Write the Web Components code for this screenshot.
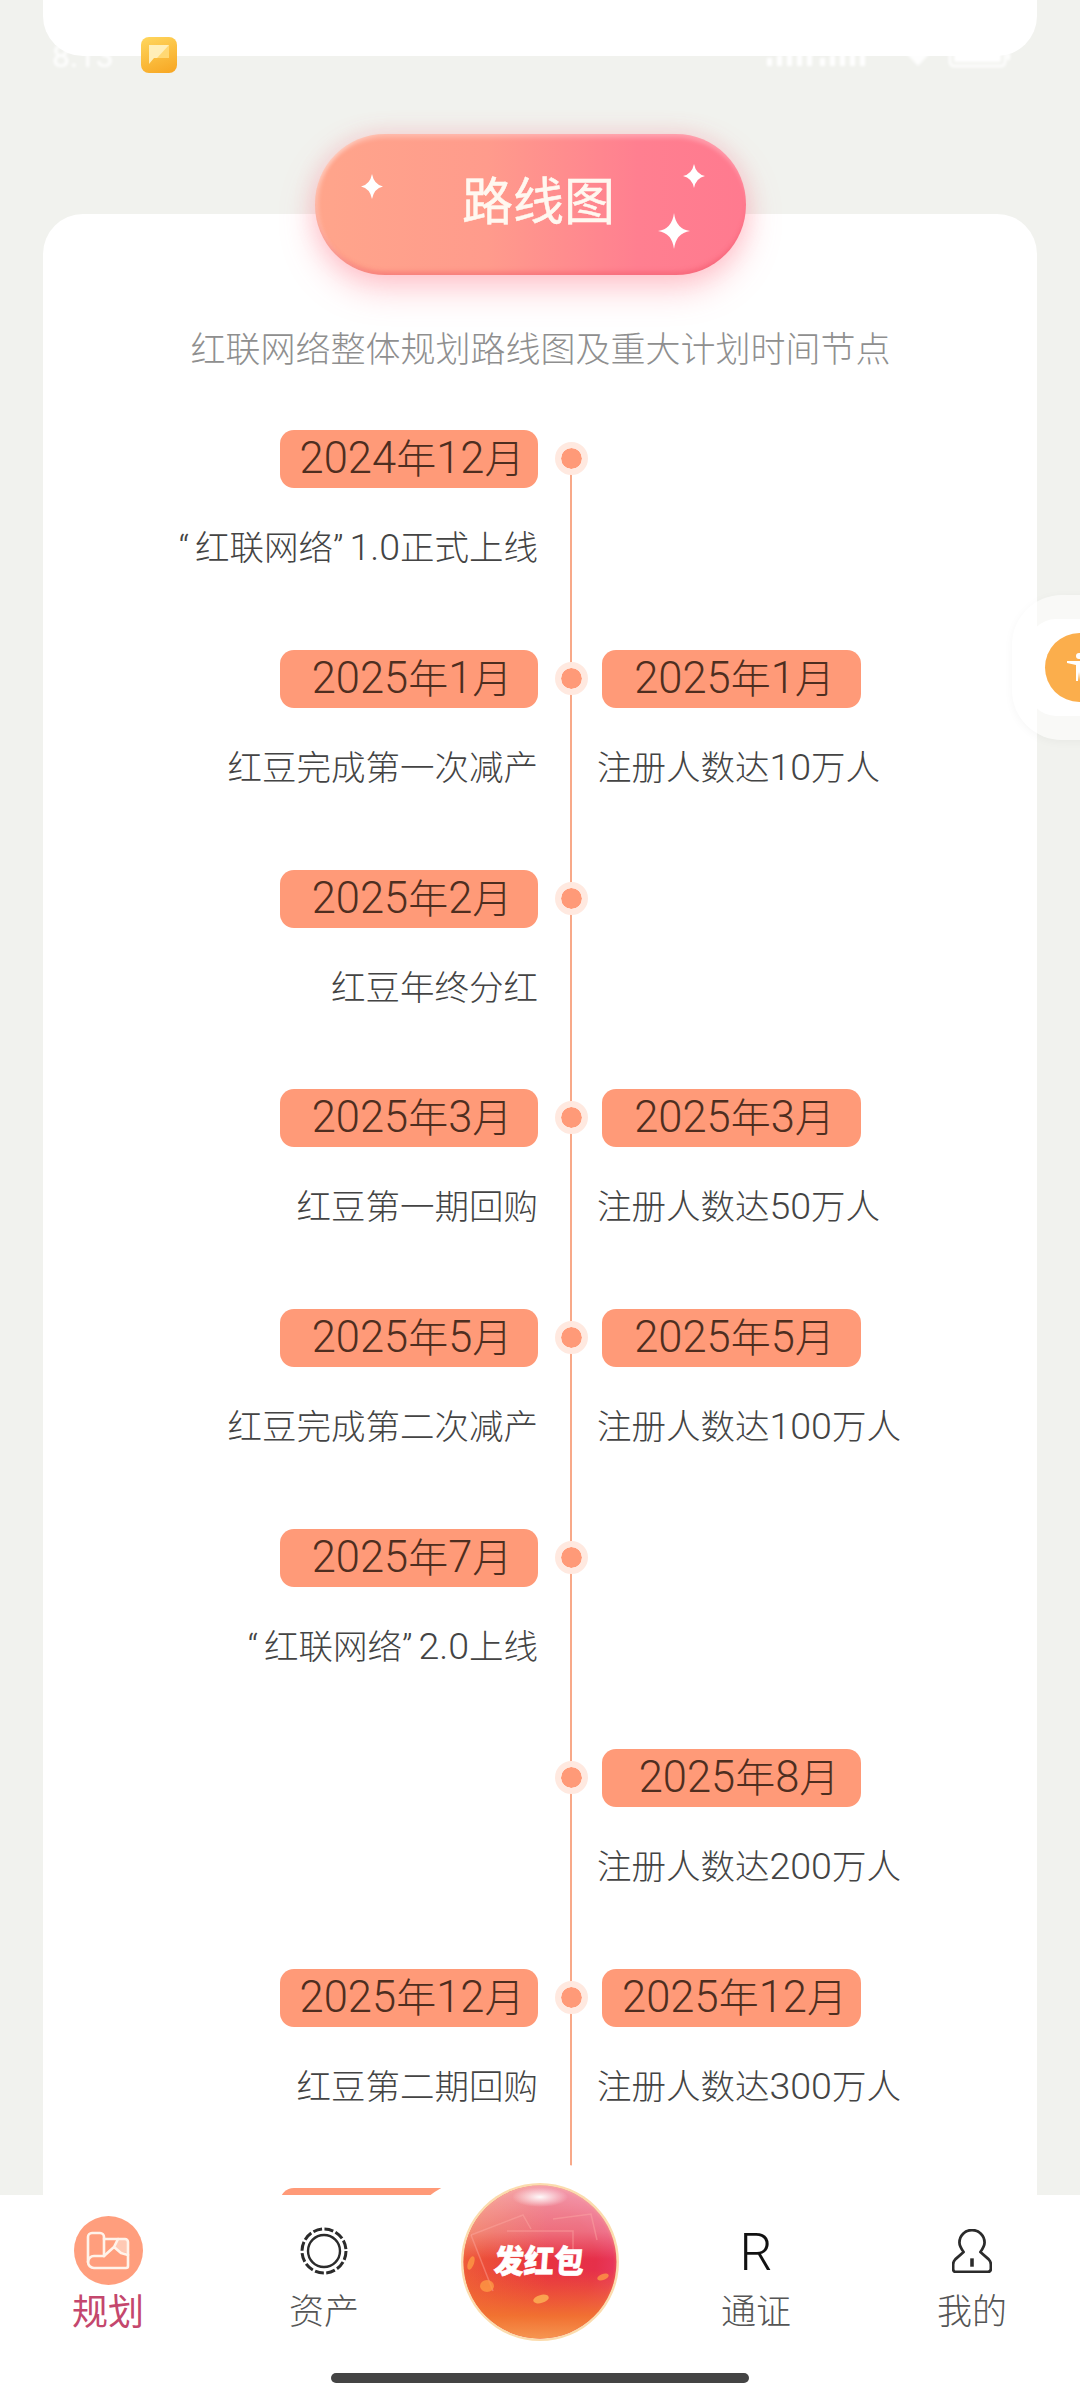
<!DOCTYPE html>
<html lang="zh-CN">
<head>
<meta charset="utf-8">
<title>路线图</title>
<style>
  html, body { margin: 0; padding: 0; }
  body { font-family: Roboto, "Noto Sans CJK SC", sans-serif; background: #f1f2ee; }
</style>
</head>
<body>
<roadmap-page>
  <status-bar slot="over"></status-bar>
  <float-widget slot="over"></float-widget>
  <bottom-nav slot="over">
    <nav-item label="规划" active>
      <svg width="69" height="69" viewBox="0 0 69 69">
        <circle cx="34.5" cy="34.5" r="34.5" fill="#ff9e7d"/>
        <path d="M44 23h9v14l-7-1-6-6z" fill="#ffc9b4"/>
        <g fill="none" stroke="#fff3ea" stroke-width="2.6" stroke-linecap="round" stroke-linejoin="round">
          <path d="M14 46V21a4 4 0 0 1 4-4h8a4 4 0 0 1 4 4v19"/>
          <path d="M30 23h21a3 3 0 0 1 3 3v24a2 2 0 0 1-2 2H20a6 6 0 0 1-6-6 6 6 0 0 1 6-6h10"/>
          <path d="M30 40l10-9 7 6 7 2M44 23l-4 8"/>
        </g>
      </svg>
    </nav-item>
    <nav-item label="资产">
      <svg width="50" height="50" viewBox="0 0 50 50" fill="none" stroke="#2b2b2b">
        <circle cx="25" cy="25" r="22" stroke-width="3" stroke-dasharray="9 2.5"/>
        <circle cx="25" cy="25" r="16" stroke-width="2.4"/>
      </svg>
    </nav-item>
    <red-ball></red-ball>
    <nav-item label="通证"><span class="r">R</span></nav-item>
    <nav-item label="我的">
      <svg width="40" height="44" viewBox="0 0 38 42" fill="none" stroke="#2b2b2b" stroke-width="2.6" stroke-linejoin="round">
        <path d="M11 22C8 18 7 15 7 13a12 12 0 0 1 24 0c0 2-1 5-4 9l8 7q2 2 2 5v4q0 3-3 3H4q-3 0-3-3v-4q0-3 2-5z"/>
        <path d="M19 28v8" stroke-width="3.4"/>
      </svg>
    </nav-item>
  </bottom-nav>

  <roadmap-pill>路线图</roadmap-pill>
  <roadmap-card sub="红联网络整体规划路线图及重大计划时间节点">
    <timeline-row first left="2024年12月" ltext="“红联网络”1.0正式上线"></timeline-row>
    <timeline-row left="2025年1月" ltext="红豆完成第一次减产" right="2025年1月" rtext="注册人数达10万人"></timeline-row>
    <timeline-row left="2025年2月" ltext="红豆年终分红"></timeline-row>
    <timeline-row left="2025年3月" ltext="红豆第一期回购" right="2025年3月" rtext="注册人数达50万人"></timeline-row>
    <timeline-row left="2025年5月" ltext="红豆完成第二次减产" right="2025年5月" rtext="注册人数达100万人"></timeline-row>
    <timeline-row left="2025年7月" ltext="“红联网络”2.0上线"></timeline-row>
    <timeline-row right="2025年8月" rtext="注册人数达200万人" nudge></timeline-row>
    <timeline-row left="2025年12月" ltext="红豆第二期回购" right="2025年12月" rtext="注册人数达300万人"></timeline-row>
    <timeline-row left=" "></timeline-row>
  </roadmap-card>
</roadmap-page>

<script>
const FONT = `Roboto, "Noto Sans CJK SC", sans-serif`;

// digits and curly quotes run wider in the reference than the stock font gives
const fmt = (s) => s
  .replace(/[\d.]+/g, '<span class="num">$&</span>')
  .replace(/[“”]/g, '<span class="q">$&</span>');

class RoadmapPage extends HTMLElement {
  constructor() {
    super();
    this.attachShadow({ mode: "open" });
    this.shadowRoot.innerHTML = `
    <style>
      :host {
        display: block;
        position: relative;
        width: 1080px;
        height: 2400px;
        overflow: hidden;
        background: #f1f2ee;
        font-family: ${FONT};
      }
      .top-card {
        height: 56px;
        margin: 0 43px;
        background: #fff;
        border-radius: 0 0 40px 40px;
      }
    </style>
    <div class="top-card"></div>
    <slot></slot>
    <slot name="over"></slot>`;
  }
}

class StatusBar extends HTMLElement {
  constructor() {
    super();
    this.attachShadow({ mode: "open" });
    this.shadowRoot.innerHTML = `
    <style>
      :host {
        position: absolute;
        left: 52px;
        right: 68px;
        top: 37px;
        height: 36px;
        display: flex;
        align-items: center;
        color: #fff;
      }
      .time { font-size: 32px; width: 89px; margin-top: 2px; filter: blur(1.4px); }
      .app {
        width: 36px;
        height: 36px;
        border-radius: 8px;
        background: linear-gradient(160deg, #ffd75e, #f7a521);
        display: grid;
        place-items: center;
      }
      .right { margin-left: auto; margin-top: 2px; filter: blur(1.4px); }
    </style>
    <span class="time">8:13</span>
    <span class="app">
      <svg width="22" height="20" viewBox="0 0 22 20"><path d="M1 0h20v13H6l-5 6z" fill="#fff3c4" opacity=".9"/><path d="M21 0v13H9z" fill="#ffd873"/></svg>
    </span>
    <svg class="right" width="247" height="24" viewBox="0 0 247 24" fill="#fff">
      <path d="M2 14h5v8H2zM12 11h5v11h-5zM22 8h5v14h-5zM32 5h5v17h-5zM42 2h5v20h-5z"/>
      <path d="M55 14h5v8h-5zM65 11h5v11h-5zM75 8h5v14h-5zM85 5h5v17h-5zM95 2h5v20h-5z"/>
      <path d="M140 8q13-10 26 0l-13 14z" opacity=".9"/>
      <rect x="185" y="3" width="55" height="19" rx="4" fill="none" stroke="#fff" stroke-width="2.5"/>
      <rect x="189" y="7" width="47" height="11" rx="1"/>
      <rect x="242" y="9" width="3" height="7"/>
    </svg>`;
  }
}

class FloatWidget extends HTMLElement {
  constructor() {
    super();
    this.attachShadow({ mode: "open" });
    this.shadowRoot.innerHTML = `
    <style>
      :host {
        position: absolute;
        left: 1012px;
        top: 595px;
        width: 100px;
        height: 145px;
        border-radius: 50px 0 0 50px;
        background: rgba(255, 255, 255, .55);
        box-shadow: 0 2px 10px rgba(0, 0, 0, .04);
        display: flex;
        align-items: center;
      }
      .inner {
        margin-left: 16px;
        width: 90px;
        height: 97px;
        border-radius: 28px 0 0 28px;
        background: #fff;
        display: flex;
        align-items: center;
      }
      .circle {
        flex: none;
        margin-left: 17px;
        width: 69px;
        height: 69px;
        border-radius: 50%;
        background: #fbae4c;
      }
      svg { display: block; }
    </style>
    <div class="inner">
      <div class="circle">
        <svg width="69" height="69" viewBox="0 0 69 69" fill="#fff">
          <circle cx="34" cy="23" r="3"/>
          <path d="M22 28h24v2l-9 2v16h-2l-1-9-1 9h-2V32l-9-2z"/>
        </svg>
      </div>
    </div>`;
  }
}

class RoadmapPill extends HTMLElement {
  constructor() {
    super();
    this.attachShadow({ mode: "open" });
    const star = (x, y, w, h) => {
      const d = `M${w / 2} 0Q${w / 2 + 2} ${h / 2 - 2} ${w} ${h / 2}Q${w / 2 + 2} ${h / 2 + 2} ${w / 2} ${h}Q${w / 2 - 2} ${h / 2 + 2} 0 ${h / 2}Q${w / 2 - 2} ${h / 2 - 2} ${w / 2} 0Z`;
      return `<svg class="star" style="left:${x}px;top:${y}px" width="${w}" height="${h}" viewBox="0 0 ${w} ${h}"><path d="${d}" fill="#fff"/></svg>`;
    };
    this.shadowRoot.innerHTML = `
    <style>
      :host {
        display: flex;
        position: relative;
        z-index: 2;
        box-sizing: border-box;
        width: 431px;
        height: 141px;
        margin: 78px 0 -61px 315px;
        border-radius: 70px;
        align-items: center;
        justify-content: center;
        padding: 0 0 3px 16px;
        background: linear-gradient(90deg, #ffa58b 0%, #ff9b8c 40%, #ff7f90 75%, #ff7a8f 100%);
        box-shadow:
          inset 0 6px 4px -2px rgba(255, 255, 255, .25),
          inset 0 -5px 5px -2px rgba(235, 70, 90, .4),
          inset 5px 0 4px -2px rgba(255, 255, 255, .3),
          0 14px 34px rgba(255, 110, 130, .36),
          0 0 22px rgba(255, 110, 130, .2);
        color: #fff8f0;
        font-size: 51px;
        line-height: 60px;
        -webkit-text-stroke: .5px #fff8f0;
      }
      .star { position: absolute; }
    </style>
    <slot></slot>
    ${star(46, 40, 22, 25)}
    ${star(368, 30, 22, 24)}
    ${star(343, 79, 32, 36)}`;
  }
}

class RoadmapCard extends HTMLElement {
  constructor() {
    super();
    this.attachShadow({ mode: "open" });
  }

  connectedCallback() {
    this.shadowRoot.innerHTML = `
    <style>
      :host {
        display: block;
        margin: 0 43px;
        padding-top: 112px;
        background: #fff;
        border-radius: 40px 40px 0 0;
      }
      .sub {
        font-size: 35px;
        font-weight: 300;
        line-height: 50px;
        color: #8f8f8f;
        text-align: center;
        margin: 0 0 54px 1px;
      }
    </style>
    <div class="sub">${this.getAttribute("sub")}</div>
    <slot></slot>`;
  }
}

class TimelineRow extends HTMLElement {
  constructor() {
    super();
    this.attachShadow({ mode: "open" });
  }

  side(cls, date, text) {
    if (date === null) return `<div class="${cls}"></div>`;
    const nudge = this.hasAttribute("nudge") ? " nudge" : "";
    return `
      <div class="${cls}">
        <div class="badge${nudge}">${fmt(date)}</div>
        ${text ? `<div class="text">${fmt(text)}</div>` : ""}
      </div>`;
  }

  connectedCallback() {
    const left = this.getAttribute("left");
    const right = this.getAttribute("right");
    this.shadowRoot.innerHTML = `
    <style>
      :host {
        display: grid;
        grid-template-columns: 495px 64px 1fr;
        height: 219.8px;
      }
      .left { display: flex; flex-direction: column; align-items: flex-end; }
      .right { display: flex; flex-direction: column; align-items: flex-start; }
      .badge {
        box-sizing: border-box;
        width: 258px;
        height: 58px;
        padding-left: 6px;
        border-radius: 14px;
        background: #ff9a78;
        color: #4e2e20;
        font-size: 40px;
        font-weight: 300;
        line-height: 60px;
        text-align: center;
      }
      .right .badge { width: 259px; }
      .badge .num { font-size: 43.5px; line-height: 1; }
      .badge.nudge { padding-left: 15px; }
      .text {
        margin-top: 35px;
        font-size: 34.5px;
        font-weight: 300;
        line-height: 50px;
        color: #444;
        white-space: nowrap;
      }
      .text .num { font-size: 37.5px; line-height: 1; }
      .text .q { letter-spacing: 6px; }
      .right .text { margin-left: -5px; }
      .node {
        box-sizing: border-box;
        padding-left: 2px;
        display: flex;
        justify-content: center;
        background: linear-gradient(#f8a989, #f8a989) 32px ${this.hasAttribute("first") ? "28px" : "0"} / 2px 100% no-repeat;
      }
      .dot {
        box-sizing: border-box;
        width: 33px;
        height: 33px;
        margin-top: 12px;
        border-radius: 50%;
        background: #ff9a78;
        background-clip: padding-box;
        border: 6px solid #ffe9e0;
      }
    </style>
    ${this.side("left", left, this.getAttribute("ltext"))}
    <div class="node"><div class="dot"></div></div>
    ${this.side("right", right, this.getAttribute("rtext"))}`;
  }
}

class BottomNav extends HTMLElement {
  constructor() {
    super();
    this.attachShadow({ mode: "open" });
    this.shadowRoot.innerHTML = `
    <style>
      :host {
        position: absolute;
        left: 0;
        right: 0;
        bottom: 0;
        height: 205px;
        box-sizing: border-box;
        padding-top: 21px;
        background: #fff;
        z-index: 3;
      }
      .items {
        display: grid;
        grid-template-columns: repeat(5, 216px);
        height: 119px;
      }
      .home {
        width: 418px;
        height: 10px;
        margin: 38px auto 0;
        border-radius: 5px;
        background: #444;
      }
    </style>
    <div class="items"><slot></slot></div>
    <div class="home"></div>`;
  }
}

class NavItem extends HTMLElement {
  constructor() {
    super();
    this.attachShadow({ mode: "open" });
  }

  connectedCallback() {
    const active = this.hasAttribute("active");
    this.shadowRoot.innerHTML = `
    <style>
      :host {
        display: flex;
        flex-direction: column;
        align-items: center;
      }
      .icon {
        height: 69px;
        display: flex;
        align-items: center;
        justify-content: center;
      }
      .label {
        margin-top: 6px;
        font-size: ${active ? 36 : 35}px;
        font-weight: ${active ? 400 : 300};
        line-height: 44px;
        color: ${active ? "#c4476d" : "#555"};
      }
      ::slotted(.r) {
        font-family: Roboto, sans-serif;
        font-size: 52px;
        font-weight: 300;
        line-height: 52px;
        color: #111;
        margin-top: 4px;
      }
      ::slotted(svg) { display: block; }
    </style>
    <div class="icon"><slot></slot></div>
    <div class="label">${this.getAttribute("label")}</div>`;
  }
}

class RedBall extends HTMLElement {
  constructor() {
    super();
    this.attachShadow({ mode: "open" });
    this.shadowRoot.innerHTML = `
    <style>
      :host {
        display: block;
        position: relative;
      }
      .halo {
        position: absolute;
        left: -41px;
        top: -53px;
        width: 298px;
        height: 198px;
        border-radius: 50%;
        background: #fff;
      }
      .ball {
        position: absolute;
        left: 29px;
        top: -33px;
        width: 158px;
        height: 158px;
        display: grid;
        place-items: center;
      }
      svg { position: absolute; inset: 0; }
      .txt {
        position: relative;
        margin-left: -3px;
        color: #fff;
        font-size: 30px;
        font-weight: 900;
        line-height: 36px;
        transform: skewX(-4deg) scaleY(1.08);
        -webkit-text-stroke: .6px #fff;
        white-space: nowrap;
      }
    </style>
    <div class="halo"></div>
    <div class="ball">
      <svg width="158" height="158" viewBox="0 0 158 158">
        <defs>
          <radialGradient id="body" cx="50%" cy="50%" r="52%">
            <stop offset="0" stop-color="#e8323f"/>
            <stop offset=".7" stop-color="#e6304a"/>
            <stop offset=".92" stop-color="#e8375a"/>
            <stop offset="1" stop-color="#ef5c58"/>
          </radialGradient>
          <linearGradient id="top" x1="0" y1="0" x2="0" y2="1">
            <stop offset="0" stop-color="#fff" stop-opacity=".5"/>
            <stop offset=".3" stop-color="#fff" stop-opacity=".3"/>
            <stop offset=".48" stop-color="#fff" stop-opacity="0"/>
          </linearGradient>
          <linearGradient id="bottom" x1="0" y1="0" x2="0" y2="1">
            <stop offset=".55" stop-color="#f06a2c" stop-opacity="0"/>
            <stop offset=".85" stop-color="#f2762e" stop-opacity=".9"/>
            <stop offset="1" stop-color="#f69650"/>
          </linearGradient>
          <linearGradient id="leftglow" x1="0" y1="0" x2="1" y2="0">
            <stop offset="0" stop-color="#f0652c" stop-opacity=".75"/>
            <stop offset=".55" stop-color="#f0652c" stop-opacity="0"/>
          </linearGradient>
          <radialGradient id="spot" cx="50%" cy="50%" r="50%">
            <stop offset="0" stop-color="#fff" stop-opacity=".95"/>
            <stop offset="1" stop-color="#fff" stop-opacity="0"/>
          </radialGradient>
        </defs>
        <circle cx="79" cy="79" r="79" fill="#fbdcae"/>
        <circle cx="79" cy="79" r="76.5" fill="url(#body)"/>
        <circle cx="79" cy="79" r="76.5" fill="url(#leftglow)"/>
        <circle cx="79" cy="79" r="76.5" fill="url(#bottom)"/>
        <circle cx="79" cy="79" r="76.5" fill="url(#top)"/>
        <ellipse cx="79" cy="14" rx="28" ry="10" fill="url(#spot)"/>
        <g fill="none" stroke="#ffb0a8" stroke-opacity=".4" stroke-width="1.5">
          <path d="M10 52l52-20 8 14M46 48h66l0 20M92 36l38-5 6 26"/>
          <path d="M10 52l22 56"/>
        </g>
        <g fill="#ff9d45" opacity=".75">
          <ellipse cx="10" cy="80" rx="3" ry="7" transform="rotate(20 10 80)"/>
          <ellipse cx="26" cy="103" rx="7" ry="6"/>
          <ellipse cx="80" cy="116" rx="8" ry="4" transform="rotate(-15 80 116)" fill="#ffbc58"/>
          <ellipse cx="142" cy="94" rx="6" ry="3" transform="rotate(-20 142 94)"/>
        </g>
      </svg>
      <span class="txt">发红包</span>
    </div>`;
  }
}

customElements.define("roadmap-page", RoadmapPage);
customElements.define("status-bar", StatusBar);
customElements.define("float-widget", FloatWidget);
customElements.define("roadmap-pill", RoadmapPill);
customElements.define("roadmap-card", RoadmapCard);
customElements.define("timeline-row", TimelineRow);
customElements.define("bottom-nav", BottomNav);
customElements.define("nav-item", NavItem);
customElements.define("red-ball", RedBall);
</script>
</body>
</html>
